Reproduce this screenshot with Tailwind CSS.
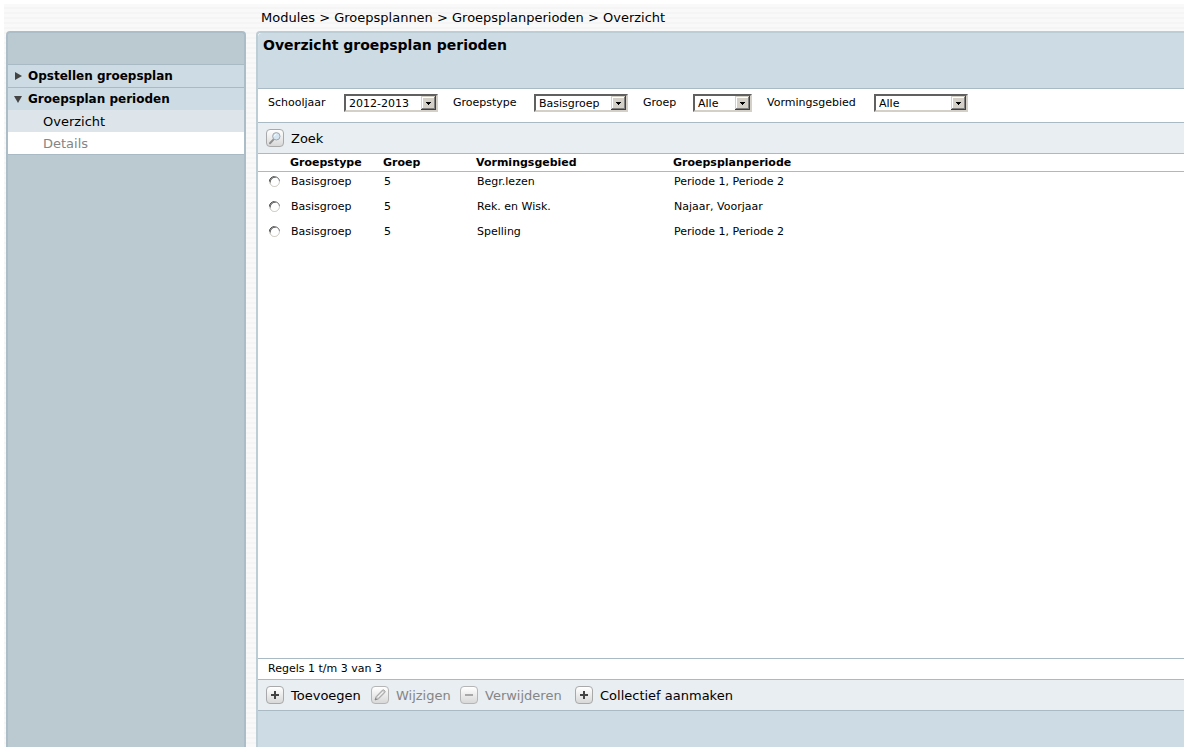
<!DOCTYPE html>
<html lang="nl">
<head>
<meta charset="utf-8">
<title>Overzicht groepsplan perioden</title>
<script src="https://cdn.jsdelivr.net/npm/@tailwindcss/browser@4"></script>
</head>
<body class="h-screen bg-white p-1 font-['Verdana','DejaVu_Sans',sans-serif] text-[13px] leading-4 text-black">
<div class="flex h-full bg-[repeating-linear-gradient(to_bottom,#f9f9f9_0px,#f9f9f9_3px,#f5f5f5_3px,#f5f5f5_5px)] pl-0.5">

  <nav class="mt-[27px] w-60 shrink-0 rounded-t border-2 border-b-0 border-[#adbdc7] bg-[#bbc9d0]">
    <ul class="mt-[31px] border-b border-[#a9bac5]">
      <li><a href="#" class="flex h-[23px] items-center border-t border-[#a9bac5] bg-[#cddbe4] pl-[7px] text-xs font-bold">
        <svg class="mr-1.5 h-2 w-[7px]" viewBox="0 0 7 8"><path d="M0 0L7 4L0 8Z" fill="#444"/></svg>Opstellen groepsplan</a></li>
      <li><a href="#" class="flex h-[23px] items-center border-t border-[#a9bac5] bg-[#cddbe4] pl-1.5 text-xs font-bold">
        <svg class="mr-1.5 h-[7px] w-2" viewBox="0 0 8 7"><path d="M0 0H8L4 7Z" fill="#444"/></svg>Groepsplan perioden</a>
        <ul>
          <li><a href="#" class="flex h-[22px] items-center bg-[#dde5ea] pt-0.5 pl-[35px]">Overzicht</a></li>
          <li><a href="#" class="flex h-[22px] items-center bg-white pt-0.5 pl-[35px] text-[#858585]">Details</a></li>
        </ul>
      </li>
    </ul>
  </nav>

  <div class="ml-2.5 flex min-w-0 flex-1 flex-col">
    <div class="h-[27px] pt-1.5 pl-[5px]">Modules &gt; Groepsplannen &gt; Groepsplanperioden &gt; Overzicht</div>
    <main class="flex flex-1 flex-col rounded-tl border-t-2 border-l-2 border-[#bdcdd6] bg-white">
      <header class="h-14 rounded-tl-sm border-b border-[#a9bac5] bg-[#cddbe4] pt-1 pl-[5px]"><h1 class="text-sm leading-4 font-bold">Overzicht groepsplan perioden</h1></header>

      <form class="flex h-[34px] items-start border-b border-[#a9bac5] pt-[5px] pl-2.5 text-[11px]">
        <label for="jaar" class="w-[76px] pt-px">Schooljaar</label>
        <span class="relative mr-[15px] flex w-[94px]"><select id="jaar" class="h-[18px] w-full appearance-none border-2 border-[#d4d0c8] border-t-[#606060] border-l-[#606060] bg-white pl-[3px] leading-none"><option>2012-2013</option></select><svg class="pointer-events-none absolute top-0.5 right-0.5" width="15" height="14"><path fill="#404040" d="M0 0h15v14H0z"/><path fill="#d4d0c8" d="M0 0h14v13H0z"/><path fill="#808080" d="M13 1h1v12H1v-1h12z"/><path fill="#fff" d="M1 1h12v1H2v10H1z"/><path d="M5 6h5v1H9v1H8v1H7V8H6V7H5z"/></svg></span>
        <label for="type" class="w-[81px] pt-px">Groepstype</label>
        <span class="relative mr-[15px] flex w-[94px]"><select id="type" class="h-[18px] w-full appearance-none border-2 border-[#d4d0c8] border-t-[#606060] border-l-[#606060] bg-white pl-[3px] leading-none"><option>Basisgroep</option></select><svg class="pointer-events-none absolute top-0.5 right-0.5" width="15" height="14"><path fill="#404040" d="M0 0h15v14H0z"/><path fill="#d4d0c8" d="M0 0h14v13H0z"/><path fill="#808080" d="M13 1h1v12H1v-1h12z"/><path fill="#fff" d="M1 1h12v1H2v10H1z"/><path d="M5 6h5v1H9v1H8v1H7V8H6V7H5z"/></svg></span>
        <label for="groep" class="w-[50px] pt-px">Groep</label>
        <span class="relative mr-[15px] flex w-[59px]"><select id="groep" class="h-[18px] w-full appearance-none border-2 border-[#d4d0c8] border-t-[#606060] border-l-[#606060] bg-white pl-[3px] leading-none"><option>Alle</option></select><svg class="pointer-events-none absolute top-0.5 right-0.5" width="15" height="14"><path fill="#404040" d="M0 0h15v14H0z"/><path fill="#d4d0c8" d="M0 0h14v13H0z"/><path fill="#808080" d="M13 1h1v12H1v-1h12z"/><path fill="#fff" d="M1 1h12v1H2v10H1z"/><path d="M5 6h5v1H9v1H8v1H7V8H6V7H5z"/></svg></span>
        <label for="gebied" class="w-[107px] pt-px">Vormingsgebied</label>
        <span class="relative flex w-[94px]"><select id="gebied" class="h-[18px] w-full appearance-none border-2 border-[#d4d0c8] border-t-[#606060] border-l-[#606060] bg-white pl-[3px] leading-none"><option>Alle</option></select><svg class="pointer-events-none absolute top-0.5 right-0.5" width="15" height="14"><path fill="#404040" d="M0 0h15v14H0z"/><path fill="#d4d0c8" d="M0 0h14v13H0z"/><path fill="#808080" d="M13 1h1v12H1v-1h12z"/><path fill="#fff" d="M1 1h12v1H2v10H1z"/><path d="M5 6h5v1H9v1H8v1H7V8H6V7H5z"/></svg></span>
      </form>

      <div class="flex h-[31px] items-center border-b border-[#a9bac5] bg-[#e8eef1] pl-2">
        <button type="button" class="flex items-center gap-[7px]">
          <span class="grid size-[18px] place-items-center rounded-sm border border-[#a9a9a9] bg-linear-to-b from-white to-[#d8d8d8]"><svg width="14" height="14" viewBox="0 0 14 14" fill="none"><path d="M2 12.2L5.6 8.4" stroke="#909090" stroke-width="2" stroke-linecap="round"/><circle cx="8.3" cy="5.3" r="3.7" fill="#d5e5f2" stroke="#a0a7ae"/><path d="M6.3 5.2Q6.6 3.6 8.3 3.3" stroke="#fff"/></svg></span><span class="pt-0.5">Zoek</span></button>
      </div>

      <table class="w-full table-fixed border-separate border-spacing-0 text-left text-[11px]">
        <colgroup><col class="w-8"><col class="w-[93px]"><col class="w-[93px]"><col class="w-[197px]"><col></colgroup>
        <thead><tr class="h-[18px]"><th class="border-b border-[#a9bac5] p-0"></th><th class="border-b border-[#a9bac5] p-0">Groepstype</th><th class="border-b border-[#a9bac5] p-0">Groep</th><th class="border-b border-[#a9bac5] p-0">Vormingsgebied</th><th class="border-b border-[#a9bac5] p-0">Groepsplanperiode</th></tr></thead>
        <tbody>
          <tr class="h-[25px] align-top"><td class="pt-1 pl-[11px]"><input type="radio" name="rij" aria-label="Begr.lezen" class="block size-[11px] rotate-45 appearance-none rounded-full border border-t-[#808080] border-r-[#d4d0c8] border-b-[#d4d0c8] border-l-[#404040] bg-white shadow-[inset_1px_0_0_#606060]"></td><td class="pt-0.5 pl-px">Basisgroep</td><td class="pt-0.5 pl-px">5</td><td class="pt-0.5 pl-px">Begr.lezen</td><td class="pt-0.5 pl-px">Periode 1, Periode 2</td></tr>
          <tr class="h-[25px] align-top"><td class="pt-1 pl-[11px]"><input type="radio" name="rij" aria-label="Rek. en Wisk." class="block size-[11px] rotate-45 appearance-none rounded-full border border-t-[#808080] border-r-[#d4d0c8] border-b-[#d4d0c8] border-l-[#404040] bg-white shadow-[inset_1px_0_0_#606060]"></td><td class="pt-0.5 pl-px">Basisgroep</td><td class="pt-0.5 pl-px">5</td><td class="pt-0.5 pl-px">Rek. en Wisk.</td><td class="pt-0.5 pl-px">Najaar, Voorjaar</td></tr>
          <tr class="h-[25px] align-top"><td class="pt-1 pl-[11px]"><input type="radio" name="rij" aria-label="Spelling" class="block size-[11px] rotate-45 appearance-none rounded-full border border-t-[#808080] border-r-[#d4d0c8] border-b-[#d4d0c8] border-l-[#404040] bg-white shadow-[inset_1px_0_0_#606060]"></td><td class="pt-0.5 pl-px">Basisgroep</td><td class="pt-0.5 pl-px">5</td><td class="pt-0.5 pl-px">Spelling</td><td class="pt-0.5 pl-px">Periode 1, Periode 2</td></tr>
        </tbody>
      </table>

      <div class="mt-auto flex h-[21px] items-center border-t border-[#a9bac5] pl-2.5 text-[11px]">Regels 1 t/m 3 van 3</div>
      <div class="flex h-8 items-center border-y border-[#a9bac5] bg-[#e8eef1] pl-2 whitespace-nowrap">
        <button type="button" class="flex w-[105px] items-center gap-[7px]"><span class="grid size-[18px] place-items-center rounded-sm border border-[#a9a9a9] bg-linear-to-b from-white to-[#d8d8d8]"><svg width="8" height="8"><path d="M3 0h2v3h3v2H5v3H3V5H0V3h3z" fill="#444"/></svg></span><span class="pt-0.5">Toevoegen</span></button>
        <button type="button" disabled class="flex w-[89px] items-center gap-[7px] text-[#858585]"><span class="grid size-[18px] place-items-center rounded-sm border border-[#b5b5b5] bg-linear-to-b from-white to-[#d8d8d8]"><svg width="12" height="12" viewBox="0 0 12 12"><path d="M1 11L2.2 7.6L8.4 1.2Q9.4 .4 10.5 1.5Q11.6 2.7 10.8 3.6L4.4 9.9Z" fill="#d2d2d2" stroke="#9b9b9b"/><path d="M3.7 8.4L9 3.1" stroke="#f7f7f7"/><path d="M1 11l.8-2 1.2 1.2z" fill="#777"/></svg></span><span class="pt-0.5">Wijzigen</span></button>
        <button type="button" disabled class="flex w-[115px] items-center gap-[7px] text-[#858585]"><span class="grid size-[18px] place-items-center rounded-sm border border-[#b5b5b5] bg-linear-to-b from-white to-[#d8d8d8]"><svg width="8" height="8"><path d="M0 3h8v2H0z" fill="#a8a8a8"/></svg></span><span class="pt-0.5">Verwijderen</span></button>
        <button type="button" class="flex items-center gap-[7px]"><span class="grid size-[18px] place-items-center rounded-sm border border-[#a9a9a9] bg-linear-to-b from-white to-[#d8d8d8]"><svg width="8" height="8"><path d="M3 0h2v3h3v2H5v3H3V5H0V3h3z" fill="#444"/></svg></span><span class="pt-0.5">Collectief aanmaken</span></button>
      </div>
      <div class="h-9 bg-[#cddbe4]"></div>
    </main>
  </div>
</div>
</body>
</html>
